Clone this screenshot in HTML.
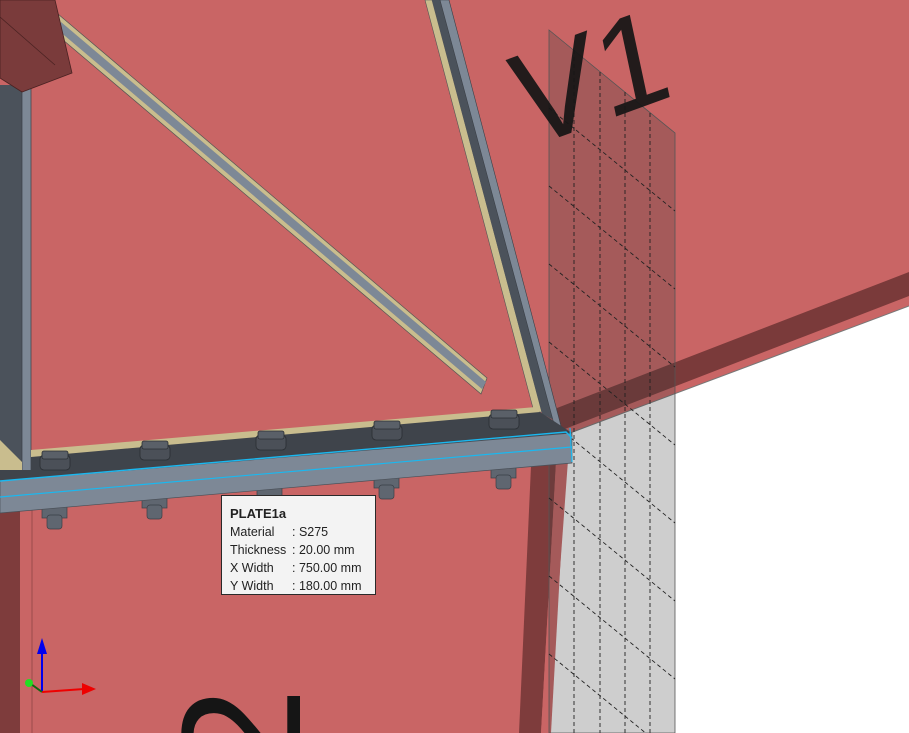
<!DOCTYPE html>
<html><head><meta charset="utf-8"><style>
html,body{margin:0;padding:0;width:909px;height:733px;overflow:hidden;background:#c96565}
svg{display:block;position:absolute;left:0;top:0}
.tip{position:absolute;left:221px;top:495px;width:155px;height:100px;background:#f3f3f3;border:1px solid #2a2a2a;box-sizing:border-box;font-family:"Liberation Sans",sans-serif;font-size:12.5px;color:#222;padding:9px 0 0 8px;line-height:18px}
.tip b{font-size:13px;display:block;line-height:17px;margin-bottom:1px}
.tip span{display:inline-block;width:62px}
</style></head><body>
<svg width="909" height="733" viewBox="0 0 909 733" xmlns="http://www.w3.org/2000/svg">
<rect width="909" height="733" fill="#c96565"/>
<polygon points="570,433 909,306 909,733 548,733" fill="#ffffff"/>
<line x1="570" y1="433" x2="909" y2="306" stroke="#777" stroke-width="1"/>
<polygon points="557,408 909,272 909,296 557,432" fill="#7a3a3a"/>
<polygon points="531,466 556,462 541,733 519,733" fill="#7e3c3c"/>
<polygon points="556,462 566,462 551,733 541,733" fill="#c96565"/>
<text x="0" y="0" transform="translate(300,782) rotate(-90)" font-family="Liberation Sans,sans-serif" font-size="170" fill="#151515">2</text>
<polygon points="549,30 675,133 675,733 549,733" fill="rgba(60,60,60,0.25)" stroke="#555" stroke-width="0.8"/>
<g stroke="#222" stroke-width="0.9" stroke-dasharray="4,3" fill="none">
<line x1="574" y1="50" x2="574" y2="733"/><line x1="600" y1="72" x2="600" y2="733"/><line x1="625" y1="92" x2="625" y2="733"/><line x1="650" y1="113" x2="650" y2="733"/>
<line x1="549" y1="108" x2="675" y2="211"/><line x1="549" y1="186" x2="675" y2="289"/><line x1="549" y1="264" x2="675" y2="367"/><line x1="549" y1="342" x2="675" y2="445"/><line x1="549" y1="420" x2="675" y2="523"/><line x1="549" y1="498" x2="675" y2="601"/><line x1="549" y1="576" x2="675" y2="679"/><line x1="549" y1="654" x2="675" y2="757"/>
</g>
<text x="0" y="0" transform="translate(524,150) rotate(-20) skewX(-8)" font-family="Liberation Sans,sans-serif" font-size="132" fill="#151515" fill-opacity="0.93">V1</text>
<rect x="0" y="85" width="22" height="395" fill="#4b525b"/>
<rect x="22" y="88" width="9" height="392" fill="#7d8896" stroke="#3a3f46" stroke-width="0.7"/>
<polygon points="0,440 22,462 22,478 0,470" fill="#c9bd8e"/>
<polygon points="58,14 487,378 481,394 56,34" fill="#c9bd8e" stroke="#555" stroke-width="0.7"/>
<polygon points="61,22 486,382 482,389 58,30" fill="#7d8896"/>
<polygon points="0,0 55,0 72,73 22,92 0,78" fill="#7a3b3b" stroke="#4a2222" stroke-width="0.8"/>
<line x1="0" y1="17" x2="55" y2="65" stroke="#4a2222" stroke-width="0.8"/>
<polygon points="425,0 432,0 542,412 534,412" fill="#c9bd8e" stroke="#555" stroke-width="0.6"/>
<polygon points="432,0 440,0 554,420 542,414" fill="#4b525b"/>
<polygon points="440,0 449,0 561,426 554,424" fill="#7d8896" stroke="#3a3f46" stroke-width="0.6"/>
<rect x="0" y="505" width="20" height="228" fill="#7e3c3c"/>
<line x1="32" y1="510" x2="32" y2="733" stroke="#9a4a4a" stroke-width="1"/>
<g fill="#5f6670" stroke="#3a3f46" stroke-width="0.7">
<rect x="42" y="506" width="25" height="12"/><rect x="47" y="515" width="15" height="14" rx="3"/>
<rect x="142" y="496" width="25" height="12"/><rect x="147" y="505" width="15" height="14" rx="3"/>
<rect x="257" y="486" width="25" height="12"/>
<rect x="374" y="476" width="25" height="12"/><rect x="379" y="485" width="15" height="14" rx="3"/>
<rect x="491" y="466" width="25" height="12"/><rect x="496" y="475" width="15" height="14" rx="3"/>
</g>
<polygon points="31,450 536,407 540,413 31,458" fill="#c9bd8e"/>
<polygon points="31,457 540,412 572,433 0,481 0,470 31,470" fill="#3f444b"/>
<polygon points="0,481 572,433 572,463 0,513" fill="#7d8896" stroke="#4a5058" stroke-width="0.7"/>
<polyline points="0,481 566,432 572,438" fill="none" stroke="#1ab8f0" stroke-width="1.4"/>
<line x1="0" y1="497" x2="572" y2="447" stroke="#1ab8f0" stroke-width="1.2"/>
<line x1="570" y1="428" x2="572" y2="462" stroke="#1ab8f0" stroke-width="1.2"/>
<g fill="#4b5058" stroke="#2a2e33" stroke-width="0.8">
<rect x="40" y="455" width="30" height="15" rx="4"/><rect x="42" y="451" width="26" height="8" rx="2" fill="#5a6068"/>
<rect x="140" y="445" width="30" height="15" rx="4"/><rect x="142" y="441" width="26" height="8" rx="2" fill="#5a6068"/>
<rect x="256" y="435" width="30" height="15" rx="4"/><rect x="258" y="431" width="26" height="8" rx="2" fill="#5a6068"/>
<rect x="372" y="425" width="30" height="15" rx="4"/><rect x="374" y="421" width="26" height="8" rx="2" fill="#5a6068"/>
<rect x="489" y="414" width="30" height="15" rx="4"/><rect x="491" y="410" width="26" height="8" rx="2" fill="#5a6068"/>
</g>
<line x1="42" y1="692" x2="42" y2="652" stroke="#0000ee" stroke-width="2"/>
<polygon points="42,638 37,654 47,654" fill="#0000ee"/>
<line x1="42" y1="692" x2="84" y2="689" stroke="#ee0000" stroke-width="2"/>
<polygon points="96,689 82,683 82,695" fill="#ee0000"/>
<line x1="42" y1="692" x2="31" y2="684" stroke="#116611" stroke-width="2"/>
<circle cx="29" cy="683" r="4" fill="#22dd22"/>
</svg>
<div class="tip"><b>PLATE1a</b><span>Material</span>: S275<br><span>Thickness</span>: 20.00 mm<br><span>X Width</span>: 750.00 mm<br><span>Y Width</span>: 180.00 mm</div>
</body></html>
